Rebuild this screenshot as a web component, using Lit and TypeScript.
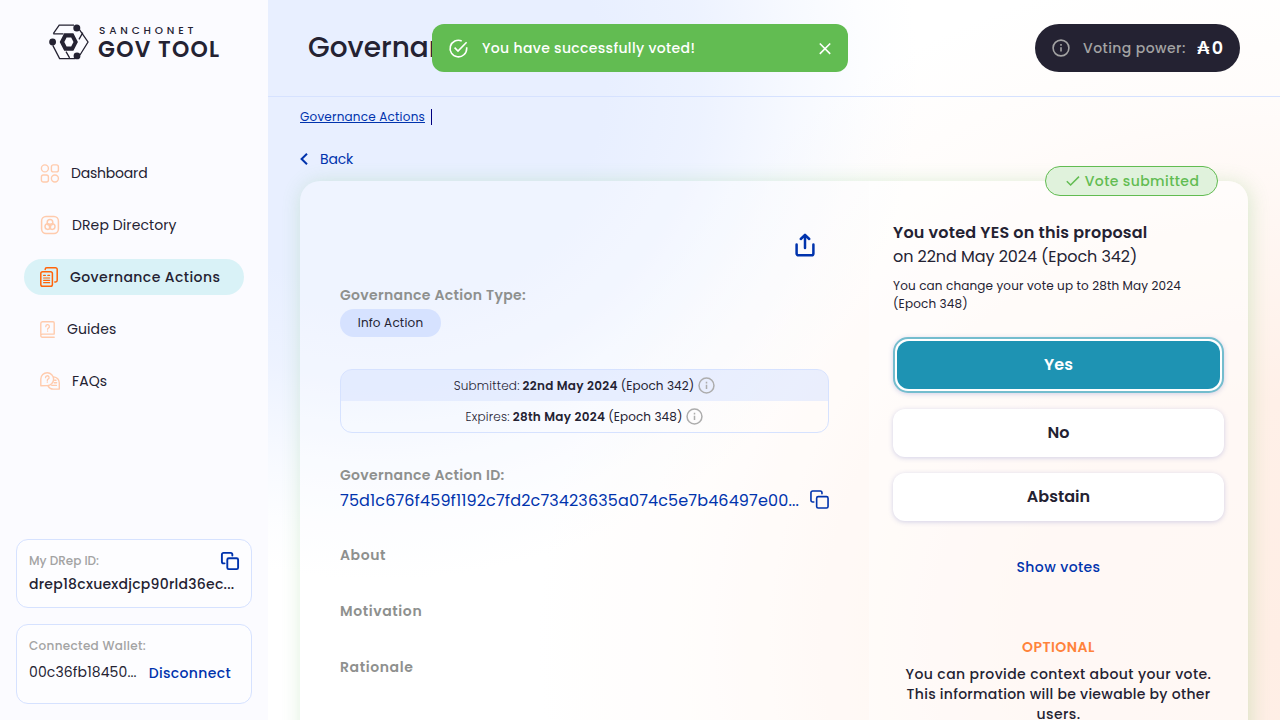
import { LitElement, html, css } from "lit";
import { customElement } from "lit/decorators.js";
import { classMap } from "lit/directives/class-map.js";

const base = css`
  * { box-sizing: border-box; }
  svg { display: block; flex: none; fill: none; overflow: visible; }
`;

const infoIcon = (size: number, width = 1.6) => html`
  <svg width=${size} height=${size} viewBox="0 0 18 18" stroke="currentColor" stroke-width=${width}>
    <circle cx="9" cy="9" r="7.9" />
    <path d="M9 8.2v4.4M9 5.1v1.7" />
  </svg>`;

const copyIcon = (size: number, width: number) => html`
  <svg width=${size} height=${size} viewBox="0 0 20 20" stroke="#0033ad" stroke-width=${width} stroke-linejoin="round" stroke-linecap="round">
    <rect x="7" y="7" width="12" height="12" rx="1.6" />
    <path d="M4 12.6H2.8A1.8 1.8 0 0 1 1 10.8V2.8A1.8 1.8 0 0 1 2.8 1h8A1.8 1.8 0 0 1 12.6 2.8V4" />
  </svg>`;

const navIcons = {
  dashboard: html`<svg width="19" height="19" viewBox="0 0 19 19" stroke="#ffcbad" stroke-width="1.4">
    <circle cx="4.9" cy="4.4" r="3.5" /><rect x="11.4" y=".9" width="7" height="7" rx="2" />
    <rect x="1.4" y="11" width="7" height="7" rx="2" /><circle cx="14.9" cy="14.5" r="3.5" /></svg>`,
  directory: html`<svg width="20" height="20" viewBox="0 0 20 20" stroke="#ffcbad" stroke-width="1.5">
    <rect x="1.6" y="1.6" width="16.8" height="16.8" rx="4.4" />
    <circle cx="10" cy="7.4" r="2.8" /><circle cx="7.8" cy="11.6" r="2.8" /><circle cx="12.2" cy="11.6" r="2.8" /></svg>`,
  actions: html`<svg width="18" height="20" viewBox="0 0 18 20" stroke="#ff640a" stroke-width="1.5" stroke-linejoin="round" stroke-linecap="round">
    <rect x=".8" y="4.8" width="11.6" height="14.4" rx="1.8" />
    <path d="M5.2 2.6V2.2A1.5 1.5 0 0 1 6.7.8h8.8A1.7 1.7 0 0 1 17.2 2.5v10.8a1.6 1.6 0 0 1-1.6 1.6h-.8" />
    <path d="M3.6 8.4h1.8M7.8 8.4h1.8M3.6 11h6M3.6 13.3h6M3.6 15.7h6" stroke-width="1.2" /></svg>`,
  guides: html`<svg width="15" height="17" viewBox="0 0 15 17" stroke="#ffcbad" stroke-width="1.4" stroke-linecap="round">
    <path d="M14.2 13.1V2A1.2 1.2 0 0 0 13 .8H2.4A1.7 1.7 0 0 0 .8 2.5v12a1.7 1.7 0 0 0 1.6 1.8h11.8M.8 14.3a1.5 1.5 0 0 1 1.6-1.2h11.8" />
    <path d="M5.8 5.6a1.8 1.8 0 1 1 2.6 1.5q-.8.4-.8 1.2M7.6 10v.2" stroke-width="1.3" /></svg>`,
  faqs: html`<svg width="20" height="18" viewBox="0 0 20 18" stroke="#ffcbad" stroke-width="1.4" stroke-linecap="round" stroke-linejoin="round">
    <path d="M.8 13.8V7.1A6.4 6.4 0 1 1 7.2 13.6Z" />
    <path d="M13.8 4.9a6 6 0 0 1 5.5 6v6.2h-6a6 6 0 0 1-5.2-3M14.6 8.2h1.4M14.2 10.8h2.4M11.8 13.4h4.6" />
    <path d="M5.5 5.7a1.8 1.8 0 1 1 2.6 1.5q-.8.4-.8 1.2M7.3 10v.2" stroke-width="1.3" /></svg>`,
};

@customElement("gov-logo")
class GovLogo extends LitElement {
  static styles = [base, css`
    :host { display: flex; gap: 9px; color: #242232; }
    .words { display: flex; flex-direction: column; }
    .net { font-size: 10.5px; font-weight: 500; line-height: 13px; letter-spacing: 3.8px; padding-left: 1px; }
    .tool { font-size: 22px; font-weight: 600; line-height: 25px; letter-spacing: 1.25px; white-space: nowrap; }
  `];
  render() {
    return html`
      <svg width="40" height="36" viewBox="0 0 40 36" stroke="#242232" stroke-width="1.3">
        <path d="M4.3 9.6 10.2 1.2H25M4.3 9.8H14.5M30.6 5.8 39 18 31 31M33.8 8.6 30 15.4M3.8 21.4 10.6 34.6H26M17 27.6l3.6 6.2" />
        <g fill="#242232" stroke="none">
          <circle cx="27.8" cy="4" r="3.5" /><circle cx="3.6" cy="18" r="3.4" /><circle cx="28" cy="31.9" r="3.4" />
          <path fill-rule="evenodd" d="M15.2 9.2h9.2L28.9 18l-4.5 8.8H15.2L10.700 18ZM17.6 13.400 15.300 18l2.300 4.600h4.600L24.500 18l-2.300-4.600Z" />
        </g>
      </svg>
      <div class="words"><span class="net">SANCHONET</span><span class="tool">GOV TOOL</span></div>`;
  }
}

@customElement("side-bar")
class SideBar extends LitElement {
  static styles = [base, css`
    :host { display: flex; flex-direction: column; width: 268px; flex: none; background: #fbfbff; padding: 24px 16px 16px; }
    gov-logo { margin-left: 33px; height: 37px; }
    nav { display: flex; flex-direction: column; gap: 16px; margin: 94px 8px 0; }
    .item { display: flex; align-items: center; height: 36px; padding-left: 16px; gap: 12px; border-radius: 18px; font-size: 14px; letter-spacing: .1px; white-space: nowrap; }
    .item.tight { letter-spacing: -.2px; }
    .item.active { background: #d9f2f7; font-weight: 500; letter-spacing: .42px; }
    .box { border: 1px solid #d6e2ff; border-radius: 12px; background: #fdfdff; padding: 12px; white-space: nowrap; }
    .drep { height: 69px; margin-top: auto; }
    .wallet { height: 80px; margin-top: 16px; }
    .row { display: flex; justify-content: space-between; }
    .drep .row { height: 18px; }
    .lbl { font-size: 12px; line-height: 18px; color: #a3a3a3; font-weight: 500; }
    .drep .lbl { letter-spacing: 0; }
    .wallet .lbl { letter-spacing: .33px; }
    .id { font-size: 14px; font-weight: 500; line-height: 20px; letter-spacing: .24px; margin-top: 4px; }
    .wallet .row { justify-content: flex-start; gap: 12px; line-height: 20px; font-size: 14px; letter-spacing: .12px; margin-top: 7px; }
    .wallet .off { font-weight: 500; color: #0033ad; letter-spacing: .36px; padding-top: 1px; }
  `];
  render() {
    const items: [keyof typeof navIcons, string][] = [
      ["dashboard", "Dashboard"], ["directory", "DRep Directory"], ["actions", "Governance Actions"], ["guides", "Guides"], ["faqs", "FAQs"],
    ];
    return html`
      <gov-logo></gov-logo>
      <nav>${items.map(([k, t]) => html`<div class=${classMap({ item: true, active: k === "actions", tight: k === "dashboard" })}>${navIcons[k]}<span>${t}</span></div>`)}</nav>
      <div class="box drep">
        <div class="row"><span class="lbl">My DRep ID:</span>${copyIcon(18, 2.1)}</div>
        <div class="id">drep18cxuexdjcp90rld36ec...</div>
      </div>
      <div class="box wallet">
        <div class="lbl">Connected Wallet:</div>
        <div class="row"><span>00c36fb18450...</span><span class="off">Disconnect</span></div>
      </div>`;
  }
}

@customElement("action-details")
class ActionDetails extends LitElement {
  static styles = [base, css`
    :host { display: flex; flex-direction: column; padding: 52px 40px 0; white-space: nowrap; }
    .share { display: flex; justify-content: flex-end; padding-right: 14px; height: 52px; }
    .lbl { font-size: 14px; line-height: 20px; font-weight: 600; color: #8e908e; letter-spacing: .33px; }
    .chip { align-self: flex-start; width: 101px; height: 28px; border-radius: 14px; background: #d6e2ff; font-size: 12px; line-height: 28px; letter-spacing: .18px; text-align: center; margin-top: 4px; }
    .dates { display: grid; grid-template-rows: 31px 31px; border: 1px solid #d6e2ff; border-radius: 12px; overflow: hidden; margin: 32px 0; font-size: 12px; }
    .date { display: flex; align-items: center; justify-content: center; gap: 3px; }
    .date:first-child { background: rgba(214, 226, 255, .5); }
    .date svg { margin-left: 1px; color: #adadad; }
    .date span { letter-spacing: .1px; }
    .date .thin { font-weight: 300; letter-spacing: .2px; }
    .date b { font-weight: 600; letter-spacing: .3px; }
    .hash { display: flex; justify-content: space-between; align-items: center; height: 28px; font-size: 16px; color: #0033ad; letter-spacing: .14px; margin-top: 1px; }
    .hash svg { margin-bottom: 2px; }
    .sec { margin-top: 36px; letter-spacing: .6px; }
    .first { margin-top: 31px; }
  `];
  render() {
    return html`
      <div class="share">
        <svg width="20" height="24" viewBox="0 0 20 24" stroke="#0033ad" stroke-width="2.5" stroke-linecap="round" stroke-linejoin="round">
          <path d="M1.6 11.6V20.400A1.900 1.900 0 0 0 3.500 22.300H16.500A1.900 1.900 0 0 0 18.400 20.400V11.600M10 15V2.200M5.800 6 10 1.900 14.200 6" />
        </svg>
      </div>
      <div class="lbl">Governance Action Type:</div>
      <div class="chip">Info Action</div>
      <div class="dates">
        <div class="date"><span class="thin">Submitted:</span><b>22nd May 2024</b><span>(Epoch 342)</span>${infoIcon(17)}</div>
        <div class="date"><span class="thin">Expires:</span><b>28th May 2024</b><span>(Epoch 348)</span>${infoIcon(17)}</div>
      </div>
      <div class="lbl">Governance Action ID:</div>
      <div class="hash"><span>75d1c676f459f1192c7fd2c73423635a074c5e7b46497e00...</span>${copyIcon(19, 1.7)}</div>
      <div class="lbl sec first">About</div>
      <div class="lbl sec">Motivation</div>
      <div class="lbl sec">Rationale</div>`;
  }
}

@customElement("vote-panel")
class VotePanel extends LitElement {
  static styles = [base, css`
    :host { display: flex; flex-direction: column; padding: 40px 24px 0; background: rgba(255, 255, 255, .4); border-radius: 0 20px 0 0; position: relative; white-space: nowrap; }
    .badge { position: absolute; top: -15px; right: 30px; width: 173px; height: 30px; display: flex; align-items: center; justify-content: center; gap: 5px; padding-left: 2px;
      border: 1px solid #62bc52; border-radius: 15px; background: #e0f2dc; color: #62bc52; font-size: 14px; font-weight: 500; letter-spacing: .4px; }
    .voted { font-size: 16px; line-height: 24px; font-weight: 600; letter-spacing: .2px; }
    .when { font-size: 16px; line-height: 24px; letter-spacing: -.06px; }
    .change { font-size: 12px; line-height: 18px; letter-spacing: .14px; margin: 8px 0 24px; }
    .opt { height: 48px; border-radius: 12px; background: #fff; box-shadow: 0 1px 5px rgba(80, 90, 180, .26); font-size: 16px; font-weight: 600; line-height: 48px; text-align: center; letter-spacing: .05px; margin-bottom: 16px; }
    .opt.on { height: 56px; border: 2px solid #74bdce; border-radius: 15px; padding: 2px; color: #fff; }
    .on span { display: block; border-radius: 12px; background: #1e93b3; }
    .show { align-self: center; font-size: 14px; line-height: 20px; font-weight: 500; color: #0033ad; letter-spacing: .4px; margin-top: 20px; }
    .optional { align-self: center; font-size: 14px; line-height: 20px; font-weight: 600; color: #ff833b; letter-spacing: .45px; margin-top: 60px; }
    .ctx { font-size: 14px; line-height: 20px; font-weight: 500; text-align: center; letter-spacing: .41px; margin-top: 7px; }
    .ctx .b { letter-spacing: .29px; }
  `];
  render() {
    return html`
      <div class="badge">
        <svg width="14" height="10" viewBox="0 0 14 10" stroke="currentColor" stroke-width="1.5"><path d="M.8 5.3 4.6 9 13 .6" /></svg>
        <span>Vote submitted</span>
      </div>
      <div class="voted">You voted YES on this proposal</div>
      <div class="when">on 22nd May 2024 (Epoch 342)</div>
      <div class="change">You can change your vote up to 28th May 2024<br />(Epoch 348)</div>
      <div class="opt on"><span>Yes</span></div>
      <div class="opt">No</div>
      <div class="opt">Abstain</div>
      <div class="show">Show votes</div>
      <div class="optional">OPTIONAL</div>
      <div class="ctx">You can provide context about your vote.<br /><span class="b">This information will be viewable by other</span><br />users.</div>`;
  }
}

@customElement("app-root")
class AppRoot extends LitElement {
  static styles = [base, css`
    :host { display: flex; position: relative; height: 720px; overflow: hidden; color: #242232;
      font-family: Poppins, Inter, "Open Sans", sans-serif; font-feature-settings: "cv11"; }
    main { flex: 1; display: flex; flex-direction: column; min-width: 0;
      background:
        radial-gradient(ellipse 540px 500px at 110px 80px, #e8efff 0, #e8efff 42%, rgba(232, 239, 255, .78) 60%, rgba(232, 239, 255, .35) 78%, rgba(232, 239, 255, .1) 91%, rgba(232, 239, 255, 0) 100%),
        radial-gradient(ellipse 740px 680px at 1010px 640px, #ffeee5 0, #fff0e8 35%, rgba(255, 241, 234, .6) 60%, rgba(255, 241, 234, .22) 80%, rgba(255, 241, 234, 0) 100%),
        #fff; }
    header { display: flex; justify-content: space-between; align-items: center; height: 97px; flex: none; padding: 0 40px 1px; border-bottom: 1px solid #d6e2ff; }
    h1 { margin: 0; font-size: 28px; font-weight: 500; line-height: 40px; letter-spacing: 0; }
    .power { display: flex; align-items: center; width: 205px; height: 48px; padding-left: 17px; border-radius: 24px; background: #242232; color: #a3a3a3; font-size: 14px; font-weight: 500; letter-spacing: .43px; }
    .power .txt { margin-left: 13px; width: 104px; white-space: nowrap; padding-top: 1px; }
    .ada { display: flex; gap: 2px; margin-left: 10px; color: #fff; font-size: 17.5px; line-height: 24px; font-weight: 600; letter-spacing: 0; }
    .body { display: flex; flex-direction: column; flex: 1; padding: 12px 32px 0; }
    .crumbs { display: flex; align-items: center; gap: 6px; height: 16px; font-size: 12px; color: #0033ad; letter-spacing: .2px; }
    .crumbs a { text-decoration: underline; }
    .bar { width: 1px; height: 16px; background: #000080; }
    .back { display: flex; align-items: center; gap: 12px; height: 20px; margin-top: 24px; font-size: 14px; color: #0033ad; letter-spacing: -.15px; }
    .card { display: grid; grid-template-columns: 569px 379px; flex: none; height: 600px; margin-top: 12px; border-radius: 20px; background: rgba(255, 255, 255, .3); box-shadow: 2px 2px 20px rgba(98, 188, 82, .24); }
    .toast { position: absolute; left: 432px; top: 24px; width: 416px; height: 48px; display: flex; align-items: center; padding: 0 17px; border-radius: 12px; background: #62bc52; color: #fff; font-size: 14px; font-weight: 500; letter-spacing: .34px; }
    .toast span { margin-left: 14px; flex: 1; }
  `];
  render() {
    return html`
      <side-bar></side-bar>
      <main>
        <header>
          <h1>Governance Actions</h1>
          <div class="power">${infoIcon(18)}<span class="txt">Voting power:</span><span class="ada"><span>₳</span><span>0</span></span></div>
        </header>
        <div class="body">
          <div class="crumbs"><a>Governance Actions</a><span class="bar"></span></div>
          <div class="back">
            <svg width="8" height="12" viewBox="0 0 8 12" stroke="#0033ad" stroke-width="2"><path d="M7 .8 1.6 6 7 11.2" /></svg>
            <span>Back</span>
          </div>
          <div class="card"><action-details></action-details><vote-panel></vote-panel></div>
        </div>
      </main>
      <div class="toast">
        <svg width="19" height="19" viewBox="0 0 19 19" stroke="#fff" stroke-width="1.6">
          <path d="M17.7 8.3v1.2A8.3 8.3 0 1 1 12.7 1.9M5.6 8.6 9 12 17.6 3.2" />
        </svg>
        <span>You have successfully voted!</span>
        <svg width="12" height="12" viewBox="0 0 12 12" stroke="#fff" stroke-width="1.6"><path d="M.8 1.5 11.2 11.9M11.2 1.5 .8 11.9" /></svg>
      </div>`;
  }
}
